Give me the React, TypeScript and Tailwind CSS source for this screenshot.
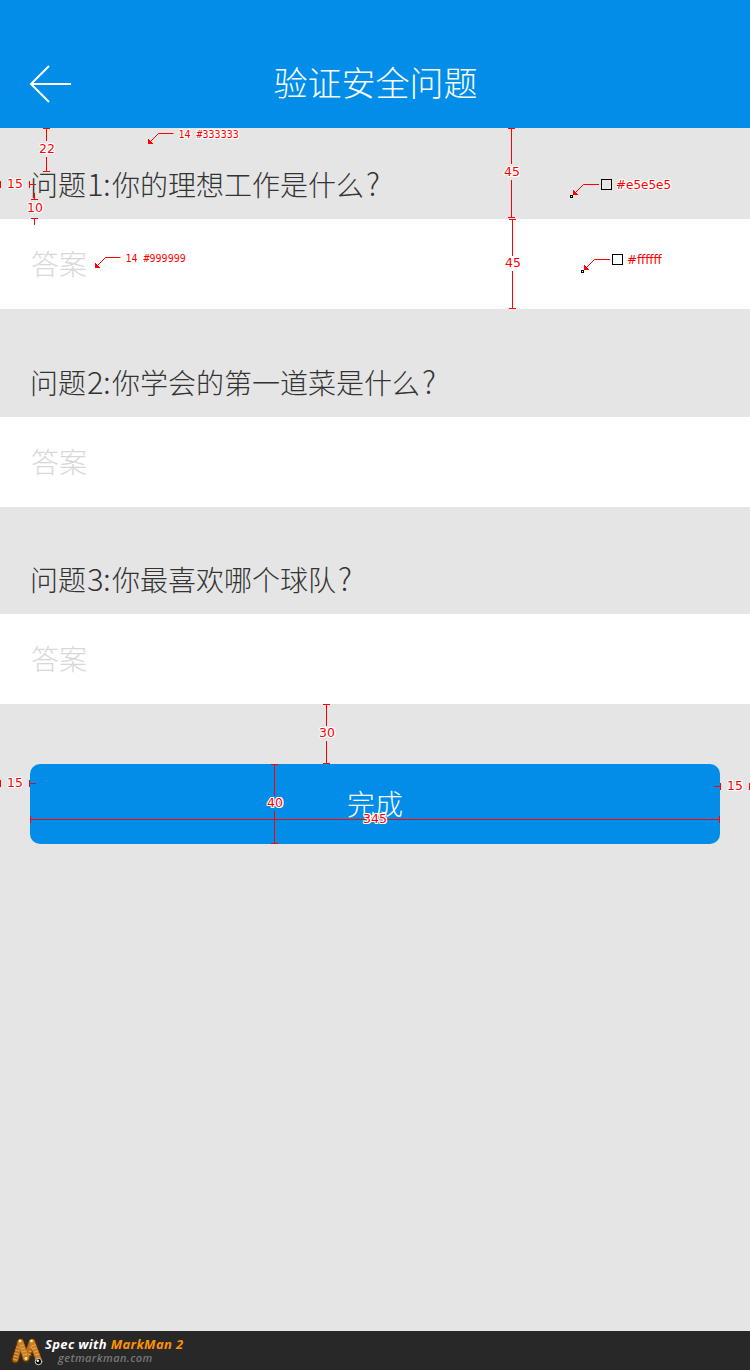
import React from "react";

const CJK = "font-['Noto_Sans_CJK_SC_Light','Noto_Sans_CJK_SC',sans-serif] font-light";
const HALO =
  "[text-shadow:1px_0_#fff,-1px_0_#fff,0_1px_#fff,0_-1px_#fff,1px_1px_#fff,-1px_-1px_#fff,1px_-1px_#fff,-1px_1px_#fff]";

function Question({ index, text, area }: { index: number; text: string; area: string }) {
  return (
    <section>
      <div className={`flex items-end px-[30px] pb-[15px] ${area}`}>
        <h2 className={`flex h-[42px] items-baseline whitespace-nowrap text-[28px] leading-[42px] text-[#333] ${CJK}`}>
          <span className="w-[57px]">问题</span>
          <span className="w-[25px] text-[31px] tracking-[-0.5px]">{index}:</span>
          <span>{text}</span>
          <span className="pl-[2px] text-[31px]">?</span>
        </h2>
      </div>
      <div className="flex h-[90px] items-center bg-white px-[30px] pb-[2px]">
        <span className={`pl-px text-[28px] leading-[42px] text-[#d8d8d8] ${CJK}`}>答案</span>
      </div>
    </section>
  );
}

function Measure({ text, place }: { text: string; place: string }) {
  return (
    <span
      className={`absolute h-4 w-6 text-center font-['DejaVu_Sans',sans-serif] text-[12.5px] leading-4 text-[#f00] ${HALO} ${place}`}
    >
      {text}
    </span>
  );
}

function Note({ text, place }: { text: string; place: string }) {
  return (
    <span
      className={`absolute whitespace-nowrap font-['DejaVu_Sans_Mono',monospace] text-[10px] leading-3 text-[#f00] ${HALO} ${place}`}
    >
      {text}
    </span>
  );
}

function Swatch({ text, place }: { text: string; place: string }) {
  return (
    <span
      className={`absolute whitespace-nowrap font-['DejaVu_Sans',sans-serif] text-[12px] leading-4 text-[#f00] ${HALO} ${place}`}
    >
      {text}
    </span>
  );
}

function Annotations() {
  return (
    <div className="pointer-events-none absolute inset-0">
      <svg width="750" height="860" className="absolute left-0 top-0" fill="none" stroke="#f00" shapeRendering="crispEdges">
        <path d="M43 128.5h7M46.5 128v13M46.5 157v15M43 171.5h7" />
        <path d="M.5 181v7M29.5 181v7M29 184.5h7" />
        <path d="M34.5 193v6M31 199.5h7M31 218.5h7M34.5 218v7" />
        <path d="M508 128.5h7M511.5 128v36M511.5 180v38M508 217.5h7" />
        <path d="M509 219.5h7M512.5 219v37M512.5 271v38M509 308.5h7" />
        <path d="M323 704.5h7M326.5 704v22M326.5 741v23M323 763.5h7" />
        <path d="M271 764.5h7M274.5 764v32M274.5 811v33M271 843.5h7" />
        <path d="M.5 780v7M29.5 780v7M720.5 783v7M749.5 783v7M714 786.5h7" />
        <path d="M29 783.5h7" stroke="#872e55" />
        <path d="M30.5 816v7M719.5 816v7" />
        <path d="M31 819.5h688" />
        <g shapeRendering="auto">
          <path d="M173.500 133.500h-15l-8 8" />
          <path d="M120.500 257.500h-15l-8 8" />
          <path d="M599 184.500h-15.500l-9 9" />
          <path d="M610 259.500h-15.500l-9 9" />
        </g>
        <g fill="#f00" stroke="none">
          <path d="M148 139v5h5z" />
          <path d="M95 263v5h5z" />
          <path d="M573 190v5h5z" />
          <path d="M584 265v5h5z" />
        </g>
        <g stroke="#000">
          <path d="M601.5 179.5h10v10h-10z" />
          <path d="M612.5 254.5h10v10h-10z" />
          <path d="M570.5 195.5h2v2h-2z" />
          <path d="M581.5 270.5h2v2h-2z" />
        </g>
      </svg>
      <Measure text="22" place="left-[35px] top-[141px]" />
      <Measure text="15" place="left-[3px] top-[176px]" />
      <Measure text="10" place="left-[23px] top-[200px]" />
      <Measure text="45" place="left-[500px] top-[164px]" />
      <Measure text="45" place="left-[501px] top-[255px]" />
      <Measure text="30" place="left-[315px] top-[725px]" />
      <Measure text="40" place="left-[263px] top-[795px]" />
      <Measure text="345" place="left-[363px] top-[811px]" />
      <Measure text="15" place="left-[3px] top-[775px]" />
      <Measure text="15" place="left-[723px] top-[778px]" />
      <Note text="14 #333333" place="left-[178.500px] top-[129px]" />
      <Note text="14 #999999" place="left-[125.500px] top-[253px]" />
      <Swatch text="#e5e5e5" place="left-[616px] top-[177px]" />
      <Swatch text="#ffffff" place="left-[627px] top-[252px]" />
    </div>
  );
}

function MarkManLogo() {
  return (
    <svg width="33" height="30" viewBox="0 0 33 30" fill="none" strokeLinecap="round" strokeLinejoin="round">
      <path d="M4 23L9.500 5L15 22L21 5L27.500 23" stroke="#5c3209" strokeWidth="7.500" />
      <path d="M4.500 22.500L9.500 5M15 21L21 5" stroke="#b86f18" strokeWidth="5.500" />
      <path d="M9.500 5L15 21M21 5L27.500 22" stroke="#c98028" strokeWidth="5.500" />
      <g stroke="#edb25a" strokeWidth=".8">
        <path d="M2 22l4 1M2.500 19l4 1M3.500 16l4 1M4.500 13l4 1M5.500 10l3 1M9 9l4-1M10 12l4-1M11 15l4-1M12 18l4-1M18 14l3 1M17 17l3 1M19 10l2 1M20.500 9l4-1M21.500 12l4-1M23 15l4-1M24 18l4-1" />
      </g>
      <circle cx="9" cy="4" r="1.300" fill="#fff0a8" />
      <circle cx="20.500" cy="4" r="1.300" fill="#fff0a8" />
      <circle cx="15" cy="21.500" r="1.400" fill="#fff08a" />
      <circle cx="27.500" cy="24.500" r="3.300" fill="#080808" stroke="#d5cfc5" strokeWidth="1" />
      <circle cx="26.800" cy="23.800" r="1.200" fill="#fff" />
    </svg>
  );
}

export default function App() {
  return (
    <div className="relative flex h-[1370px] w-[750px] flex-col overflow-hidden bg-[#e5e5e5]">
      <header className="grid h-32 grid-cols-[100px_1fr_100px] bg-[#028de8] pt-10">
        <button aria-label="返回" className="flex items-center pl-[29px]">
          <svg width="44" height="40" viewBox="0 0 44 40" fill="none" stroke="#fff" strokeWidth="2">
            <path d="M20 2L2 20L20 38M2 20H42" />
          </svg>
        </button>
        <h1 className={`flex items-center justify-center pb-[4px] pl-px text-[34px] leading-[50px] text-white ${CJK}`}>
          验证安全问题
        </h1>
      </header>
      <main className="flex-1">
        <Question index={1} text="你的理想工作是什么" area="h-[91px]" />
        <Question index={2} text="你学会的第一道菜是什么" area="h-[108px]" />
        <Question index={3} text="你最喜欢哪个球队" area="h-[107px]" />
        <div className="px-[30px] pt-[60px]">
          <button className={`flex h-20 w-full items-center justify-center rounded-[10px] bg-[#028de8] pb-[2px] text-[28px] leading-[42px] text-white ${CJK}`}>
            完成
          </button>
        </div>
      </main>
      <footer className="flex h-[39px] bg-[#282828] pl-[11px] pt-[6px] font-['Open_Sans',sans-serif] italic">
        <MarkManLogo />
        <div className="flex flex-col whitespace-nowrap pl-px">
          <p className="text-[13px] font-bold leading-[15px] tracking-[0.35px] text-white">
            Spec with <span className="text-[#ff9200]">MarkMan 2</span>
          </p>
          <p className="pl-[13px] text-[11px] font-semibold leading-[12px] tracking-[0.4px] text-[#777]">getmarkman.com</p>
        </div>
      </footer>
      <Annotations />
    </div>
  );
}
